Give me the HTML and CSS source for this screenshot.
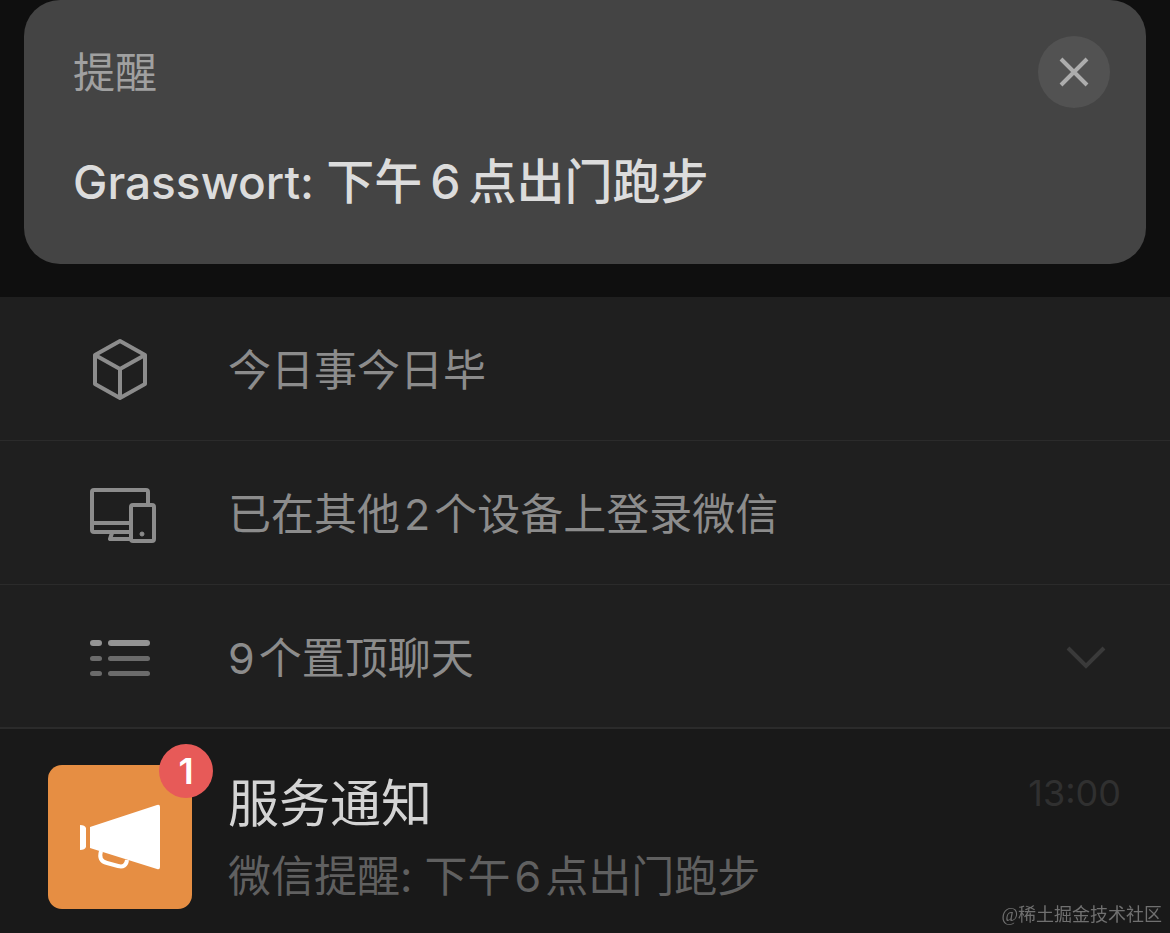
FILE: index.html
```html
<!DOCTYPE html>
<html lang="zh-CN">
<head>
  <meta charset="UTF-8" />
  <meta name="viewport" content="width=device-width, initial-scale=1" />
  <title>微信</title>
  <link rel="stylesheet" href="styles.css">
</head>
<body>
  <header class="top">
    <section class="notice">
      <div class="notice-head">
        <h2>提醒</h2>
        <button class="close" aria-label="关闭">
          <svg width="30" height="30" viewBox="0 0 30 30" fill="none" stroke="#adadad" stroke-width="4">
            <path d="M2 2L28 28M28 2L2 28" />
          </svg>
        </button>
      </div>
      <p class="notice-text"><span class="sender">Grasswort: </span>下午<span class="num">6</span>点出门跑步</p>
    </section>
  </header>

  <main>
    <ul class="pinned">
      <li>
        <svg class="icon" width="72" height="72" viewBox="0 0 72 72" fill="none" stroke="#8c8c8c" stroke-width="4" stroke-linejoin="round">
          <path d="M32 7L57 21V50L32 64L7 50V21Z" />
          <path d="M7 21L32 35L57 21M32 35V64" />
        </svg>
        <span class="label">今日事今日毕</span>
      </li>
      <li>
        <svg class="icon" width="72" height="72" viewBox="0 0 72 72" fill="none" stroke="#8c8c8c" stroke-width="4" stroke-linejoin="round">
          <path d="M60 25V14Q60 12 58 12H6Q4 12 4 14V52Q4 54 6 54H43M4 45H43M24 55L22 61H43" />
          <rect x="43" y="27" width="23" height="36" rx="2" />
          <circle cx="54" cy="56" r="2" fill="#8c8c8c" stroke="#8c8c8c" stroke-width="1" />
        </svg>
        <span class="label">已在其他<span class="num">2</span>个设备上登录微信</span>
      </li>
      <li>
        <svg class="icon" width="72" height="72" viewBox="0 0 72 72" fill="#6b6b6b">
          <rect x="2" y="18" width="12" height="6" rx="3" fill="#949494" />
          <rect x="20" y="18" width="42" height="6" rx="3" fill="#949494" />
          <rect x="2" y="34" width="12" height="5" rx="2.5" />
          <rect x="20" y="34" width="42" height="5" rx="2.5" />
          <rect x="2" y="49" width="12" height="5" rx="2.5" />
          <rect x="20" y="49" width="42" height="5" rx="2.5" />
        </svg>
        <span class="label"><span class="num first">9</span>个置顶聊天</span>
        <svg class="arrow" width="40" height="24" viewBox="0 0 40 24" fill="none" stroke="#3a3a3a" stroke-width="4">
          <path d="M2 2L20 20L38 2" />
        </svg>
      </li>
    </ul>

    <article class="chat">
      <div class="avatar">
        <svg width="144" height="144" viewBox="0 0 144 144" fill="#fff">
          <path d="M32 60Q37 60 38 63V82Q37 85 32 85Z" />
          <path d="M42 62L109 40Q112 39 112 42V102Q112 105 109 104L42 83Z" />
          <path d="M53 86Q50 96 59 98L70 101Q78 103 79 95" fill="none" stroke="#fff" stroke-width="4" />
        </svg>
        <span class="badge">1</span>
      </div>
      <div class="chat-body">
        <h3>服务通知</h3>
        <p>微信提醒: 下午<span class="num">6</span>点出门跑步</p>
      </div>
      <time>13:00</time>
    </article>
  </main>

  <div class="watermark">@稀土掘金技术社区</div>
</body>
</html>
```

FILE: styles.css
```css
* {
  box-sizing: border-box;
}

body {
  margin: 0;
  background: #191919;
  color: #8c8c8c;
  font-family: Inter, "Noto Sans CJK SC", sans-serif;
}

h2,
h3,
p,
ul {
  margin: 0;
  padding: 0;
  font-weight: 400;
}

.num {
  margin: 0 4px;
}

.num.first {
  margin-left: 0;
}

/* reminder card */
.top {
  background: #0f0f0f;
  padding: 0 24px 33px;
}

.notice {
  background: #444;
  border-radius: 36px;
  padding: 36px 36px 46px 49px;
}

.notice-head {
  display: flex;
  align-items: center;
  justify-content: space-between;
}

.notice h2 {
  padding-top: 2px;
  font-size: 42px;
  line-height: 70px;
  color: #a0a0a0;
}

.close {
  display: flex;
  align-items: center;
  justify-content: center;
  width: 72px;
  height: 72px;
  padding: 0;
  border: none;
  border-radius: 50%;
  background: #525252;
  cursor: pointer;
}

.notice-text {
  margin-top: 38px;
  font-size: 48px;
  line-height: 72px;
  font-weight: 500;
  color: #dcdcdc;
}

.notice-text .sender {
  font-size: 46px;
}

.notice-text .num {
  margin: 0 8px;
}

/* pinned rows */
.pinned {
  list-style: none;
  background: #1f1f1f;
}

.pinned li {
  display: flex;
  align-items: center;
  height: 144px;
  padding: 3px 64px 0 88px;
  border-bottom: 1px solid #2b2b2b;
}

.pinned li:last-child {
  border-bottom: 2px solid #2b2b2b;
}

.icon {
  flex: none;
  margin-right: 68px;
}

.label {
  flex: 1;
  font-size: 43px;
  line-height: 60px;
}

/* chat row */
.chat {
  display: flex;
  padding: 36px 49px 24px 48px;
}

.avatar {
  position: relative;
  flex: none;
  width: 144px;
  height: 144px;
  margin-right: 36px;
  border-radius: 14px;
  background: #e68e43;
}

.badge {
  position: absolute;
  top: -21px;
  right: -21px;
  width: 54px;
  height: 54px;
  border-radius: 50%;
  background: #e75a58;
  color: #fff;
  font-size: 36px;
  line-height: 54px;
  font-weight: 600;
  text-align: center;
}

.chat-body {
  flex: 1;
}

.chat h3 {
  font-size: 51px;
  line-height: 78px;
  color: #d4d4d4;
}

.chat p {
  font-size: 43px;
  line-height: 66px;
  color: #606060;
}

.chat time {
  font-size: 36px;
  line-height: 56px;
  color: #303030;
}

.watermark {
  position: fixed;
  right: 8px;
  bottom: 4px;
  font-family: "Liberation Serif", "Noto Sans CJK SC", serif;
  font-size: 18px;
  line-height: 28px;
  color: #707070;
}
```
